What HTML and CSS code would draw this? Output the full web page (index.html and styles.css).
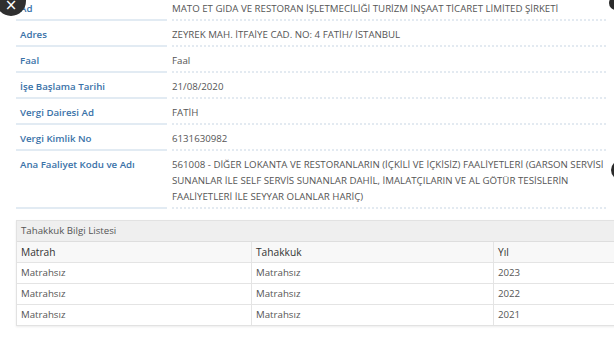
FILE: index.html
```html
<!DOCTYPE html>
<html lang="tr">
<head>
<meta charset="utf-8">
<link rel="stylesheet" href="styles.css">
</head>
<body>
<div class="page">
  <div class="info">
    <div class="row"><div class="label">Ad</div><div class="value">MATO ET GIDA VE RESTORAN İŞLETMECİLİĞİ TURİZM İNŞAAT TİCARET LİMİTED ŞİRKETİ</div></div>
    <div class="row"><div class="label">Adres</div><div class="value">ZEYREK MAH. İTFAİYE CAD. NO: 4 FATİH/ İSTANBUL</div></div>
    <div class="row"><div class="label">Faal</div><div class="value">Faal</div></div>
    <div class="row"><div class="label">İşe Başlama Tarihi</div><div class="value">21/08/2020</div></div>
    <div class="row"><div class="label">Vergi Dairesi Ad</div><div class="value">FATİH</div></div>
    <div class="row"><div class="label">Vergi Kimlik No</div><div class="value">6131630982</div></div>
    <div class="row"><div class="label">Ana Faaliyet Kodu ve Adı</div><div class="value">561008 - DİĞER LOKANTA VE RESTORANLARIN (İÇKİLİ VE İÇKİSİZ) FAALİYETLERİ (GARSON SERVİSİ SUNANLAR İLE SELF SERVİS SUNANLAR DAHİL, İMALATÇILARIN VE AL GÖTÜR TESİSLERİN FAALİYETLERİ İLE SEYYAR OLANLAR HARİÇ)</div></div>
  </div>

  <div class="panel">
    <div class="panel-heading">Tahakkuk Bilgi Listesi</div>
    <table class="grid">
      <thead>
        <tr><th class="c1">Matrah</th><th class="c2">Tahakkuk</th><th>Yıl</th></tr>
      </thead>
      <tbody>
        <tr><td>Matrahsız</td><td>Matrahsız</td><td>2023</td></tr>
        <tr><td>Matrahsız</td><td>Matrahsız</td><td>2022</td></tr>
        <tr><td>Matrahsız</td><td>Matrahsız</td><td>2021</td></tr>
      </tbody>
    </table>
  </div>
</div>
<div class="close">×</div>
<div class="edge edge-top"></div>
<div class="edge edge-mid"></div>
</body>
</html>
```
FILE: styles.css
```css
html, body {
  margin: 0;
  padding: 0;
  overflow: hidden;
  background: #fff;
}
body {
  width: 614px;
  height: 341px;
  position: relative;
  font-family: "Open Sans", "Noto Sans", sans-serif;
  font-size: 9.7px;
  color: #555;
}
.page {
  padding: 0 0 0 16px;
}
.info {
  margin-top: -5px;
  width: 590px;
}
.row {
  display: flex;
  line-height: 16px;
}
.label {
  width: 147px;
  flex: none;
  padding: 6px 0 2px 4px;
  border-bottom: 2px solid #e2ebf3;
  color: #3a72a8;
  font-weight: 600;
}
.value {
  flex: 1;
  margin-left: 5px;
  padding: 6px 0 2px 0;
  border-bottom: 2px dotted #e3eaf1;
  color: #555;
}
.panel {
  margin-top: 11px;
  width: 640px;
  border: 1px solid #e2e2e2;
  box-shadow: 0 1px 2px rgba(0,0,0,0.08);
}
.panel-heading {
  background: #efefef;
  border-bottom: 1px solid #dedede;
  padding: 2px 4px;
  line-height: 16px;
  color: #555;
  height: 16px;
}
.grid {
  width: 100%;
  border-collapse: collapse;
  table-layout: fixed;
}
.grid th, .grid td {
  text-align: left;
  padding: 2px 4px;
  line-height: 16px;
  border-bottom: 1px solid #e4e4e4;
  border-left: 1px solid #e4e4e4;
}
.grid th:first-child, .grid td:first-child {
  border-left: none;
}
.grid tr:last-child td {
  border-bottom: none;
}
.grid th {
  background: #f8f8f8;
  font-weight: 400;
  font-size: 10.2px;
  color: #333;
}
.grid td {
  color: #555;
  height: 16px;
}
.c1 { width: 226px; }
.c2 { width: 233px; }
.close {
  position: absolute;
  left: -4px;
  top: -14px;
  width: 30px;
  height: 30px;
  border-radius: 50%;
  background: #2f2f2f;
  color: #fff;
  font-family: "DejaVu Sans", sans-serif;
  font-size: 15px;
  line-height: 18px;
  text-align: center;
  padding-top: 10px;
  box-sizing: border-box;
}
.edge {
  position: absolute;
  width: 14px;
  height: 14px;
  border-radius: 50%;
  background: #2a2a2a;
}
.edge-top { left: 609px; top: -4px; }
.edge-mid { left: 611px; top: 160px; height: 20px; width: 20px; }
```
